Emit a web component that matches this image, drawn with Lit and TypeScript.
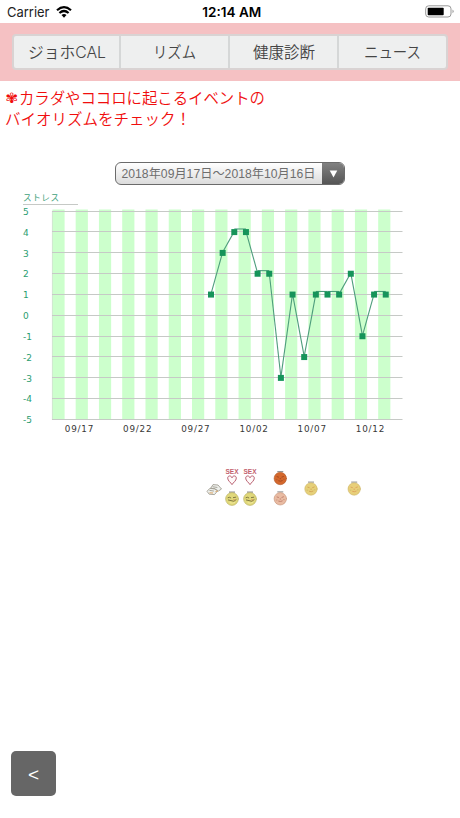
import { LitElement, html, svg, css } from "lit";
import { customElement } from "lit/decorators.js";

const LEVELS = [5, 4, 3, 2, 1, 0, -1, -2, -3, -4, -5];
const VALUES = [1, 3, 4, 4, 2, 2, -3, 1, -2, 1, 1, 1, 2, -1, 1, 1];
const DATES = ["09/17", "09/22", "09/27", "10/02", "10/07", "10/12"];
const TABS = [
  { label: "ジョホCAL", width: 78 },
  { label: "リズム", width: 43 },
  { label: "健康診断", width: 62 },
  { label: "ニュース", width: 57 },
];

const levelY = (v: number) => 126.7 - v * 20.83;
const dayX = (i: number) => 211 + i * 11.65;

@customElement("rhythm-chart")
export class RhythmChart extends LitElement {
  static styles = css`
    :host { display: block; }
    svg { display: block; font-family: "DejaVu Sans", "Noto Sans CJK JP", sans-serif; }
    .title { font: 400 8.6px "Noto Sans CJK JP", sans-serif; fill: #3fa17c; }
    .level { font: 400 9px "DejaVu Sans", sans-serif; fill: #2a9d70; }
    .date { font: 400 8.8px "DejaVu Sans", sans-serif; fill: #383838; }
    .stripe { fill: #ccffcc; }
    .grid { stroke: #c6c9c6; stroke-width: 1; }
    .edge { stroke: #c3d5c3; stroke-width: 0.6; }
    .curve { stroke: #4d9d7c; stroke-width: 1.1; fill: none; }
    .mark { fill: #16945a; }
  `;

  render() {
    return html`<svg width="460" height="252" viewBox="0 0 460 252">
      <text class="title" x="23" y="12" textLength="36">ストレス</text>
      <line class="grid" x1="23" x2="78" y1="15.5" y2="15.5"></line>
      ${Array.from({ length: 15 }, (_, i) => svg`
        <rect class="stripe" x=${52.4 + i * 23.27} y="20.5" width="12.2" height="210.5"></rect>`)}
      <line class="edge" x1="52.4" x2="52.4" y1="22" y2="231"></line>
      ${LEVELS.map((v) => svg`
        <line class="grid" x1="52" x2="402.5" y1=${Math.round(levelY(v)) - 0.5} y2=${Math.round(levelY(v)) - 0.5}></line>
        <text class="level" x="23" y=${levelY(v) + 3.4}>${v}</text>`)}
      ${VALUES.slice(1).map((v, i) => {
        const lift = v === VALUES[i] ? 2.4 : 0;
        return svg`<line class="curve" x1=${dayX(i)} x2=${dayX(i + 1)}
          y1=${levelY(VALUES[i]) - 1 - lift} y2=${levelY(v) - 1 - lift}></line>`;
      })}
      ${VALUES.map((v, i) => svg`
        <rect class="mark" x=${dayX(i) - 3} y=${levelY(v) - 3.3} width="6" height="6"></rect>`)}
      ${DATES.map((d, i) => svg`
        <text class="date" x=${64.8 + i * 58.2} y="242.5" textLength="28.5">${d}</text>`)}
    </svg>`;
  }
}

@customElement("event-icons")
export class EventIcons extends LitElement {
  static styles = css`
    :host { display: block; }
    svg { display: block; }
    .tag { font: 700 6.5px "Liberation Sans", sans-serif; fill: #c2606c; }
    .heart { fill: #fffafa; stroke: #b04d60; stroke-width: 0.9; }
    .ink { fill: none; stroke: #8a8578; stroke-width: 0.7; stroke-linecap: round; stroke-linejoin: round; }
    .pale { fill: #eef0ec; }
  `;

  private face(x: number, y: number, fill: string, edge: string, ink: string) {
    return svg`<g transform="translate(${x} ${y})" fill="none" stroke-linecap="round">
      <path d="M-2.6 -6.9H2.6" stroke="#8a8a8a" stroke-width="1"></path>
      <circle r="6.2" fill=${fill} stroke=${edge} stroke-width="0.6"></circle>
      <path d="M-3.2 -1.8L-1.8 -1.4M1.6 -1.4L3.2 -2M-1.6 2.4Q0.3 3.2 2 2.2M-.2 .2H.4" stroke=${ink} stroke-width="0.8"></path>
      <path d="M-4 1.2H-3.2M3.2 .8H4" stroke=${edge} stroke-width="0.8"></path>
    </g>`;
  }

  private smirk(x: number) {
    return svg`<g transform="translate(${x} 39)" fill="none" stroke-linecap="round">
      <path d="M-2.6 -6.9H2.6" stroke="#777" stroke-width="1"></path>
      <circle r="6.4" fill="#e0d87a" stroke="#b5ac62" stroke-width="0.6"></circle>
      <path d="M-4 -1.4Q-2.6 -2.4 -1.2 -1.2M1.4 -1.4L3.8 -1.8M-3.6 1L-1 1.6Q2 3.6 4.2 .7" stroke="#756d3c" stroke-width="0.9"></path>
      <path d="M1.6 .8H3" stroke="#d9925a" stroke-width="0.9"></path>
      <path d="M-2 3.8Q.6 4.8 2.6 3.6" stroke="#f2e99c" stroke-width="1"></path>
    </g>`;
  }

  private love(x: number) {
    return svg`<text class="tag" x=${x - 6.5} y="14" textLength="13">SEX</text>
      <path class="heart" transform="translate(${x} 20)"
        d="M0 4.6C-1.2 2.5 -4.3 .8 -4.3 -1.9C-4.3 -4.6 -.9 -4.8 0 -2.3C.9 -4.8 4.3 -4.6 4.3 -1.9C4.3 .8 1.2 2.5 0 4.6Z"></path>`;
  }

  render() {
    return html`<svg width="460" height="55" viewBox="0 0 460 55">
      <path class="ink pale" d="M210.5 28.5L213 24.6L218 25L221.5 29L218.5 31L215 29Z"></path>
      <path class="ink pale" d="M207.3 31L210 28.2L215 29L217.5 31L214.5 34.6L209.5 34.2Z"></path>
      <path class="ink" d="M213 26.8L217 27.4M209.8 30.4L213.5 31"></path>
      <path d="M209.5 32.8L213 33M215.5 31.5L218 31" stroke="#dfa96b" stroke-width="1"></path>
      ${this.love(232)}${this.love(250)}
      ${this.smirk(232)}${this.smirk(250)}
      ${this.face(280.3, 18.5, "#d4682c", "#b05a2e", "#99431f")}
      ${this.face(280.3, 38.8, "#e9bba2", "#c4937b", "#b87564")}
      ${this.face(311, 29, "#e6d079", "#ccb668", "#cf9c52")}
      ${this.face(354.2, 29, "#e8cf79", "#ccb668", "#da9a58")}
    </svg>`;
  }
}

@customElement("app-root")
export class AppRoot extends LitElement {
  static styles = css`
    :host {
      display: flex;
      flex-direction: column;
      height: 818px;
      background: #fff;
      overflow: hidden;
      font-family: "Liberation Sans", "Noto Sans CJK JP", sans-serif;
    }
    svg { display: block; overflow: visible; }
    .status {
      display: grid;
      grid-template-columns: 1fr auto 1fr;
      align-items: center;
      height: 23px;
      box-sizing: border-box;
      padding: 0 5px 0 7px;
      color: #151515;
    }
    .carrier { display: flex; align-items: center; gap: 6px; font: 13.2px Inter, sans-serif; }
    .clock { font: 600 13.2px Inter, sans-serif; transform: translateX(0.8px); }
    .battery { justify-self: end; }
    .nav { height: 58px; box-sizing: border-box; padding: 11px 12px 0 12px; background: #f5c1c3; }
    .tabs {
      display: grid;
      grid-template-columns: 105px 109px 109px 1fr;
      height: 36px;
      box-sizing: border-box;
      border: 2px solid #d9d3d3;
      border-radius: 4px;
      background: #eeefef;
    }
    .tab { display: flex; align-items: center; justify-content: center; }
    .tab + .tab { border-left: 2px solid #d5d7d7; }
    .tab text { font: 350 15.8px Inter, "Noto Sans CJK JP", sans-serif; fill: #454545; }
    .lead { height: 81px; box-sizing: border-box; padding-top: 5px; }
    .lead text { font: 350 15.8px "Noto Sans CJK JP", sans-serif; fill: #f00d0d; }
    .lead .flower { font: 14px "DejaVu Sans", sans-serif; }
    .period {
      display: flex;
      align-self: center;
      width: 230px;
      height: 23px;
      box-sizing: border-box;
      border: 1.5px solid #6b6b6b;
      border-radius: 6px;
      overflow: hidden;
      background: linear-gradient(#ffffff, #dcdcdc);
    }
    .range { flex: 1; }
    .range text { font: 12.3px "Liberation Sans", "Noto Sans CJK JP", sans-serif; fill: #6e6e6e; }
    .arrow {
      display: flex;
      align-items: center;
      justify-content: center;
      width: 22px;
      background: linear-gradient(#818181, #555);
    }
    rhythm-chart { margin-top: 4px; }
    event-icons { margin-top: 19px; }
    .back {
      display: flex;
      align-items: center;
      justify-content: center;
      width: 45px;
      height: 45px;
      margin: auto 0 22px 11px;
      padding: 2px 0 0;
      border: 0;
      border-radius: 5px;
      background: #666;
      color: #fff;
      font: 19px "Liberation Sans", sans-serif;
    }
  `;

  render() {
    return html`
      <div class="status">
        <div class="carrier">
          <svg width="43" height="16" viewBox="0 0 43 16"><text x="0" y="13" textLength="42.5" lengthAdjust="spacingAndGlyphs" fill="#222">Carrier</text></svg>
          <svg width="16" height="12" viewBox="0 0 16 12">
            <path d="M1 4.2Q8 -2 15 4.2M3.4 7Q8 3 12.6 7" fill="none" stroke="#000" stroke-width="2.2"></path>
            <path d="M5.5 9.1Q8 7 10.5 9.1L8 11.7Z"></path>
          </svg>
        </div>
        <svg class="clock" width="60" height="18" viewBox="0 0 60 18"><text x="0.5" y="14.2" textLength="59" lengthAdjust="spacingAndGlyphs">12:14 AM</text></svg>
        <svg class="battery" width="30" height="13" viewBox="0 0 30 13">
          <rect x="0.7" y="0.8" width="25.3" height="11.2" rx="3" fill="#fff" stroke="#999" stroke-width="1"></rect>
          <rect x="2.7" y="2.7" width="16" height="7.6" rx="0.8"></rect>
          <path d="M27.5 4.5Q30 6.4 27.5 8.3Z" fill="#999"></path>
        </svg>
      </div>
      <nav class="nav">
        <div class="tabs">
          ${TABS.map((t) => html`<div class="tab">
            <svg width=${t.width} height="24" viewBox="0 0 ${t.width} 24"><text x="0" y="17.5" textLength=${t.width} lengthAdjust="spacingAndGlyphs">${t.label}</text></svg>
          </div>`)}
        </div>
      </nav>
      <div class="lead">
        <svg width="460" height="50" viewBox="0 0 460 50">
          <text class="flower" x="5.2" y="17" textLength="13" lengthAdjust="spacingAndGlyphs">✾</text>
          <text x="19" y="17.5" textLength="246" lengthAdjust="spacingAndGlyphs">カラダやココロに起こるイベントの</text>
          <text x="5" y="38.5" textLength="186" lengthAdjust="spacingAndGlyphs">バイオリズムをチェック！</text>
        </svg>
      </div>
      <div class="period">
        <div class="range"><svg width="204" height="20" viewBox="0 0 204 20"><text x="5.5" y="14.5" textLength="194" lengthAdjust="spacingAndGlyphs">2018年09月17日〜2018年10月16日</text></svg></div>
        <div class="arrow"><svg width="9" height="8" viewBox="0 0 9 8"><path d="M0.7 0.5H8.3L4.5 7.5Z" fill="#fff"></path></svg></div>
      </div>
      <rhythm-chart></rhythm-chart>
      <event-icons></event-icons>
      <button class="back">&lt;</button>
    `;
  }
}
